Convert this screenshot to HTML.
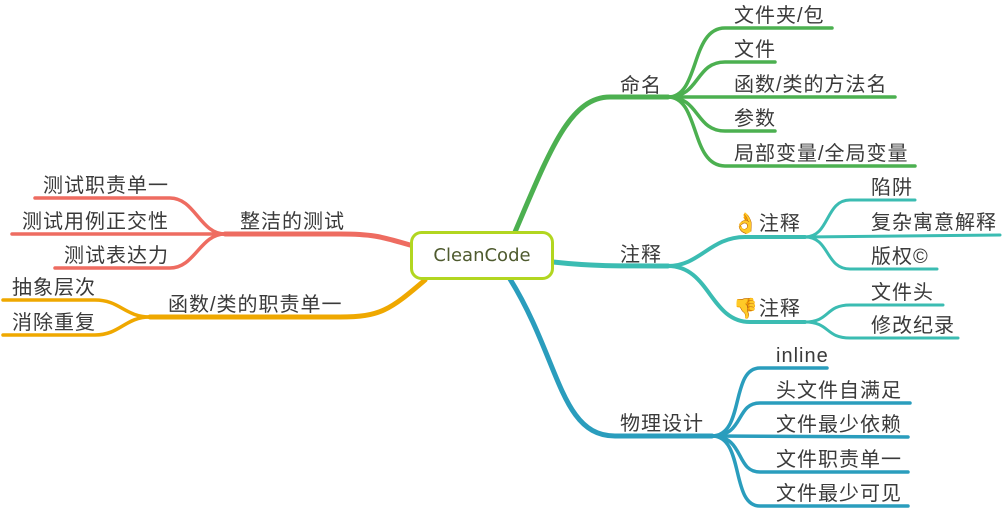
<!DOCTYPE html>
<html><head><meta charset="utf-8"><style>
html,body{margin:0;padding:0;background:#fff;}
svg{display:block;}
text{font-family:"Liberation Sans","Noto Sans CJK SC",sans-serif;font-size:20px;letter-spacing:1px;fill:#3a3a3a;}
</style></head><body>
<svg width="1006" height="510" viewBox="0 0 1006 510" xmlns="http://www.w3.org/2000/svg">
<g fill="none" stroke-linecap="round">
<g stroke="#4cb050">
<path d="M515 232 C550 150 570 97 610 97 L668 97" stroke-width="5"/>
<path d="M668 97 C700 97 690 28 725 28 L832 28" stroke-width="3.5"/>
<path d="M668 97 C700 97 695 62 725 62 L775 62" stroke-width="3.5"/>
<path d="M668 97 L895 97" stroke-width="3.5"/>
<path d="M668 97 C700 97 695 131 725 131 L775 131" stroke-width="3.5"/>
<path d="M668 97 C700 97 690 166 725 166 L915 166" stroke-width="3.5"/>
</g>
<g stroke="#3bbcb2">
<path d="M553 262 C590 266 610 266 668 266" stroke-width="5"/>
<path d="M668 266 C700 266 710 237 745 237 L805 237" stroke-width="4"/>
<path d="M668 266 C710 266 710 322 750 322 L805 322" stroke-width="4"/>
<path d="M805 237 C830 237 825 200 850 200 L915 200" stroke-width="3"/>
<path d="M805 237 L1000 235" stroke-width="3"/>
<path d="M805 237 C830 237 825 269 850 269 L937 269" stroke-width="3"/>
<path d="M805 322 C830 322 825 305 850 305 L943 305" stroke-width="3"/>
<path d="M805 322 C830 322 825 338 850 338 L958 338" stroke-width="3"/>
</g>
<g stroke="#2a9dbd">
<path d="M510 279 C560 360 560 436 615 436 L712 436" stroke-width="5"/>
<path d="M712 436 C745 436 730 368 760 368 L827 368" stroke-width="3.5"/>
<path d="M712 436 C745 436 735 403 760 403 L910 403" stroke-width="3.5"/>
<path d="M712 436 L908 437" stroke-width="3.5"/>
<path d="M712 436 C745 436 735 472 760 472 L908 472" stroke-width="3.5"/>
<path d="M712 436 C745 436 730 506 760 506 L908 506" stroke-width="3.5"/>
</g>
<g stroke="#ee6c61">
<path d="M410 245 C380 236 370 234 340 234 L225 234" stroke-width="5"/>
<path d="M225 234 C200 234 195 198 170 198 L35 198" stroke-width="3.5"/>
<path d="M225 234 L12 234" stroke-width="3.5"/>
<path d="M225 234 C200 234 195 268 170 268 L55 268" stroke-width="3.5"/>
</g>
<g stroke="#efa800">
<path d="M425 280 C390 310 380 317 340 317 L150 317" stroke-width="5"/>
<path d="M150 317 C125 317 120 300 95 300 L3 300" stroke-width="3.5"/>
<path d="M150 317 C125 317 120 335 95 335 L3 335" stroke-width="3.5"/>
</g>
</g>
<rect x="411.5" y="232.5" width="141" height="46" rx="10" fill="#fff" stroke="#b2d620" stroke-width="3"/>
<text x="482" y="261" text-anchor="middle" style="font-size:18px;letter-spacing:0;fill:#4e5a2e;font-family:'DejaVu Sans','Liberation Sans',sans-serif">CleanCode</text>
<text x="620" y="92">命名</text>
<text x="734" y="22">文件夹/包</text>
<text x="734" y="56">文件</text>
<text x="734" y="91">函数/类的方法名</text>
<text x="734" y="125">参数</text>
<text x="734" y="160">局部变量/全局变量</text>
<text x="620" y="261">注释</text>
<text x="733" y="230">👌注释</text>
<text x="733" y="315">👎注释</text>
<text x="871" y="194">陷阱</text>
<text x="871" y="229">复杂寓意解释</text>
<text x="871" y="263">版权©</text>
<text x="871" y="299">文件头</text>
<text x="871" y="332">修改纪录</text>
<text x="620" y="430">物理设计</text>
<text x="776" y="362">inline</text>
<text x="776" y="397">头文件自满足</text>
<text x="776" y="431">文件最少依赖</text>
<text x="776" y="466">文件职责单一</text>
<text x="776" y="500">文件最少可见</text>
<text x="240" y="228">整洁的测试</text>
<text x="43" y="192">测试职责单一</text>
<text x="22" y="228">测试用例正交性</text>
<text x="64" y="262">测试表达力</text>
<text x="168" y="311">函数/类的职责单一</text>
<text x="12" y="294">抽象层次</text>
<text x="12" y="329">消除重复</text>
</svg>
</body></html>
